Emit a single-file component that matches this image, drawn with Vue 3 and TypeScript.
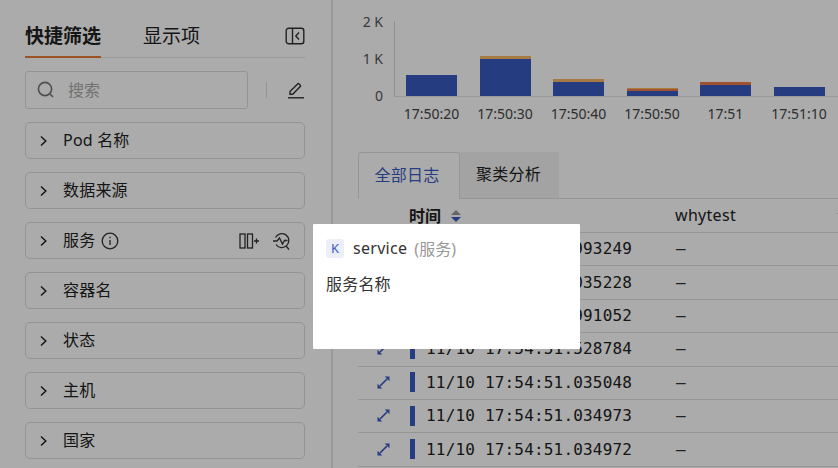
<script setup lang="ts">
const filters = [
  { name: 'Pod 名称' },
  { name: '数据来源' },
  { name: '服务', active: true },
  { name: '容器名' },
  { name: '状态' },
  { name: '主机' },
  { name: '国家' },
]
const bars = [
  { label: '17:50:20', top: 0, mid: 0, blue: 21 },
  { label: '17:50:30', top: 3, mid: 0, blue: 37 },
  { label: '17:50:40', top: 3, mid: 0, blue: 14 },
  { label: '17:50:50', top: 1, mid: 2.5, blue: 5 },
  { label: '17:51', top: 0, mid: 3, blue: 11 },
  { label: '17:51:10', top: 0, mid: 0, blue: 9 },
]
const rows = ['.993249', '.035228', '.991052', '.528784', '.035048', '.034973', '.034972'].map(
  (t) => '11/10 17:54:51' + t,
)
</script>

<template>
  <div class="page">
    <aside class="side">
      <div class="side-tabs">
        <span class="stab on">快捷筛选</span>
        <span class="stab">显示项</span>
        <svg class="collapse" width="20" height="18" viewBox="0 0 20 18" fill="none" stroke="#333" stroke-width="1.4">
          <rect x="1.2" y="1.2" width="17.6" height="15.6" rx="2.5" />
          <path d="M7.5 1.2v15.6M14 5.5 10.8 9l3.2 3.5" />
        </svg>
      </div>
      <div class="search-row">
        <div class="search">
          <svg width="20" height="20" viewBox="0 0 20 20" fill="none" stroke="#777" stroke-width="1.6">
            <circle cx="9" cy="9" r="6.6" />
            <path d="m14 14 3 3" />
          </svg>
          <span>搜索</span>
        </div>
        <i class="vline"></i>
        <svg class="pen" width="18" height="18" viewBox="0 0 18 18" fill="none" stroke="#333" stroke-width="1.4">
          <path d="M3 13.2v-2.7l7.6-7.6a1 1 0 0 1 1.4 0l1.3 1.3a1 1 0 0 1 0 1.4L5.7 13.2Z" />
          <path d="M1 16.8h16" />
        </svg>
      </div>
      <div v-for="f in filters" :key="f.name" class="filter">
        <svg class="chev" width="8" height="12" viewBox="0 0 8 12" fill="none" stroke="#222" stroke-width="1.5">
          <path d="m1 1.5 4.8 4.5L1 10.5" />
        </svg>
        <span class="fname">{{ f.name }}</span>
        <template v-if="f.active">
          <svg class="info" width="18" height="18" viewBox="0 0 18 18" fill="none" stroke="#333" stroke-width="1.3">
            <circle cx="9" cy="9" r="7.8" />
            <path d="M9 8v5M9 4.8v1.5" />
          </svg>
          <span class="grow"></span>
          <svg width="20" height="18" viewBox="0 0 20 18" fill="none" stroke="#333" stroke-width="1.3">
            <rect x="1" y="2" width="5" height="14" />
            <rect x="8.5" y="2" width="5" height="14" />
            <path d="M15 9h5M17.5 6.5v5" />
          </svg>
          <svg class="ana" width="20" height="20" viewBox="0 0 20 20" fill="none" stroke="#333" stroke-width="1.3">
            <path d="M3.5 6.5A7 7 0 1 1 4 13.5M14 15l3 3.5" />
            <path d="M1 10h4l2.5-3 3 6 2-3.5h3" />
          </svg>
        </template>
      </div>
    </aside>

    <main class="main">
      <div class="chart">
        <div class="yaxis"><span>2 K</span><span>1 K</span><span>0</span></div>
        <div class="plot">
          <div v-for="b in bars" :key="b.label" class="slot">
            <div class="bar">
              <i class="tan" :style="{ height: b.top + 'px' }"></i>
              <i class="rust" :style="{ height: b.mid + 'px' }"></i>
              <i class="navy" :style="{ height: b.blue + 'px' }"></i>
            </div>
            <span class="xl">{{ b.label }}</span>
          </div>
        </div>
      </div>

      <div class="tabs">
        <span class="tab on">全部日志</span>
        <span class="tab">聚类分析</span>
      </div>

      <div class="thead">
        <span class="th-time">时间
          <svg class="sort" width="12" height="14" viewBox="0 0 12 14">
            <path d="M6 1 11 6H1Z" fill="#999" />
            <path d="M6 13 1 8h10Z" fill="#3a5bc0" />
          </svg>
        </span>
        <span class="th-why">whytest</span>
        <svg class="sort-clip" width="12" height="14" viewBox="0 0 12 14">
          <path d="M6 1 11 6H1Z" fill="#999" />
        </svg>
      </div>
      <div v-for="r in rows" :key="r" class="row">
        <svg class="exp" width="15" height="15" viewBox="0 0 15 15" fill="none">
          <path d="M4 11 11 4" stroke="#3a5bc0" stroke-width="1.7" />
          <path d="M13.500 1.500v4.800L8.700 1.500ZM1.500 13.500V8.700L6.300 13.500Z" fill="#3a5bc0" />
        </svg>
        <i class="mark"></i>
        <span class="ts">{{ r }}</span>
        <span class="dash">–</span>
      </div>
    </main>

    <div class="mask"></div>
    <div class="pop">
      <div class="pop-head">
        <span class="badge">K</span>
        <span class="key">service</span>
        <span class="alias">(服务)</span>
      </div>
      <p class="desc">服务名称</p>
    </div>
  </div>
</template>

<style>
html, body { margin: 0; overflow: hidden; }
</style>

<style scoped>
.page {
  position: relative;
  display: flex;
  width: 838px;
  height: 468px;
  overflow: hidden;
  background: #fff;
  color: #222;
  font-family: "Noto Sans", "Noto Sans CJK SC", sans-serif;
  font-size: 16px;
}
.side {
  box-sizing: border-box;
  flex: none;
  width: 333px;
  padding: 0 26px 0 25px;
  border-right: 2px solid #e4e4e6;
}
.side-tabs {
  position: relative;
  display: flex;
  gap: 42px;
  height: 58px;
  box-sizing: border-box;
  padding-top: 22px;
  border-bottom: 1px solid #e4e4e6;
}
.stab { font-size: 19px; line-height: 28px; height: 35px; box-sizing: border-box; }
.stab.on { font-weight: 700; border-bottom: 2px solid #ee7a3a; height: 36px; }
.collapse { position: absolute; right: 0; top: 27px; }
.search-row { display: flex; align-items: center; margin: 13px 0; height: 38px; }
.search {
  box-sizing: border-box;
  display: flex;
  align-items: center;
  gap: 12px;
  width: 223px;
  height: 38px;
  padding: 0 0 2px 10px;
  border: 1px solid #dcdcdc;
  border-radius: 3px;
  color: #aaa;
}
.search svg { margin-top: 2px; }
.vline { width: 1px; height: 16px; background: #ddd; margin-left: 18px; }
.pen { margin-left: 20px; }
.filter {
  box-sizing: border-box;
  display: flex;
  align-items: center;
  height: 37px;
  margin-bottom: 13px;
  padding: 0 12px 0 14px;
  border: 1px solid #dcdcdc;
  border-radius: 5px;
}
.fname { margin: -4px 0 0 15px; letter-spacing: .2px; }
.info { margin-left: 6px; }
.grow { flex: 1; }
.ana { margin-left: 13px; }

.main { flex: 1; min-width: 0; padding-left: 25px; }
.chart { display: flex; height: 125px; padding-top: 12px; box-sizing: border-box; }
.yaxis {
  width: 25px;
  height: 94px;
  display: flex;
  flex-direction: column;
  justify-content: space-between;
  align-items: flex-end;
  color: #555;
  font-size: 14px;
  line-height: 20px;
}
.plot {
  position: relative;
  display: flex;
  margin-left: 11px;
  height: 75px;
  margin-top: 9px;
  padding-left: 11px;
  flex: 1;
  border-left: 1px solid #d8d8dc;
  border-bottom: 1px solid #e4e4e6;
  gap: 22.5px;
  margin-right: -25px;
}
.slot { position: relative; width: 51px; height: 75px; display: flex; align-items: flex-end; justify-content: center; }
.bar { width: 51px; display: flex; flex-direction: column; }
.bar i { display: block; }
.tan { background: #f9b766; }
.rust { background: #ef7a43; }
.navy { background: #3a5ac0; }
.xl { position: absolute; top: 83px; left: -12px; right: -12px; text-align: center; color: #444; font-size: 14px; line-height: 20px; }

.tabs { display: flex; margin-top: 27px; height: 46px; border-bottom: 1px solid #e0e0e0; }
.tab {
  box-sizing: border-box;
  height: 46px;
  width: 99px;
  padding-right: 2px;
  text-align: center;
  line-height: 44px;
  letter-spacing: .3px;
  background: #f3f3f3;
}
.tab.on {
  width: 102px;
  height: 47px;
  padding-right: 4px;
  color: #3a5bc0;
  background: #fff;
  border: 1px solid #e0e0e0;
  border-bottom: 0;
  border-radius: 3px 3px 0 0;
}
.thead {
  display: flex;
  align-items: center;
  height: 32px;
  padding-bottom: 1px;
  border-bottom: 1px solid #e0e0e0;
}
.th-time { flex: none; margin-left: 51px; width: 266px; font-weight: 700; display: flex; align-items: center; gap: 9px; }
.sort { margin-top: 1px; }
.th-why { flex: none; letter-spacing: .3px; }
.sort-clip { margin-left: 100px; flex: none; }
.row {
  box-sizing: border-box;
  display: flex;
  align-items: center;
  height: 33.4px;
  padding-bottom: 1px;
  border-bottom: 1px solid #e0e0e0;
}
.exp { margin-left: 18px; flex: none; }
.mark { width: 5px; height: 20px; margin-left: 19px; background: #3a5ac0; flex: none; }
.ts { margin-left: 11px; width: 250px; font-family: "DejaVu Sans Mono", monospace; letter-spacing: .18px; }
.dash { font-family: "DejaVu Sans Mono", monospace; color: #333; }

.mask { position: absolute; inset: 0; background: rgba(0, 0, 0, .33); }
.pop {
  position: absolute;
  left: 313px;
  top: 224px;
  box-sizing: border-box;
  width: 267px;
  height: 125px;
  padding: 15px 13px;
  background: #fff;
  border-radius: 1px;
}
.pop-head { display: flex; align-items: center; height: 19px; }
.badge {
  width: 18px;
  height: 19px;
  border-radius: 3px;
  background: #eceef8;
  color: #3a5bc0;
  font-size: 13px;
  line-height: 19px;
  text-align: center;
}
.key { margin: -2px 0 0 9px; letter-spacing: .3px; color: #333; }
.alias { margin: -2px 0 0 7px; color: #999; }
.desc { margin: 16px 0 0; line-height: 20px; letter-spacing: .2px; color: #333; }
</style>
